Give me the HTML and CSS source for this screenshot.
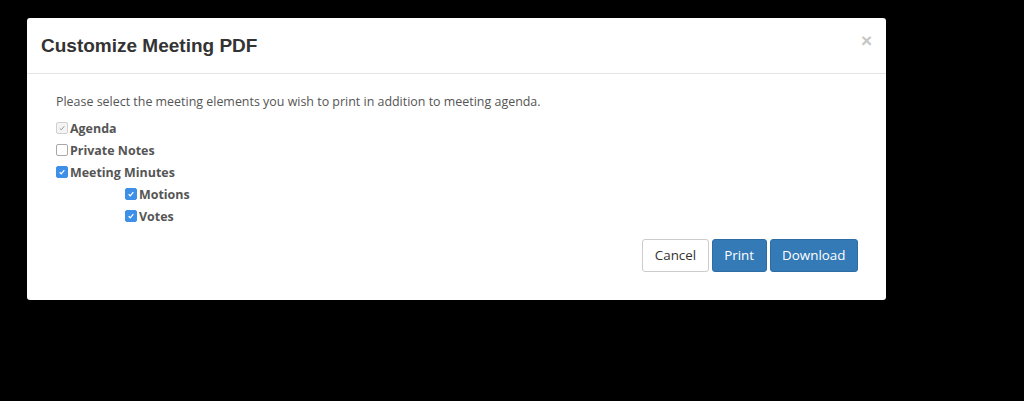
FILE: index.html
```html
<!DOCTYPE html>
<html>
<head>
<meta charset="utf-8">
<link rel="stylesheet" href="styles.css">
</head>
<body>
<div class="modal">
  <div class="modal-header">
    <h4 class="modal-title">Customize Meeting PDF</h4>
    <span class="close">&times;</span>
  </div>
  <div class="modal-body">
    <p class="intro">Please select the meeting elements you wish to print in addition to meeting agenda.</p>
    <label class="opt"><span class="cb disabled"><svg viewBox="0 0 12 12"><path d="M3.2 6.3 L5.1 8.2 L8.8 3.8" fill="none" stroke="#9a9a9a" stroke-width="1.2"/></svg></span>Agenda</label>
    <label class="opt"><span class="cb"></span>Private Notes</label>
    <label class="opt"><span class="cb on"><svg viewBox="0 0 12 12"><path d="M3.2 6.3 L5.1 8.2 L8.8 3.8" fill="none" stroke="#fff" stroke-width="1.5"/></svg></span>Meeting Minutes</label>
    <div class="sub">
      <label class="opt"><span class="cb on"><svg viewBox="0 0 12 12"><path d="M3.2 6.3 L5.1 8.2 L8.8 3.8" fill="none" stroke="#fff" stroke-width="1.5"/></svg></span>Motions</label>
      <label class="opt"><span class="cb on"><svg viewBox="0 0 12 12"><path d="M3.2 6.3 L5.1 8.2 L8.8 3.8" fill="none" stroke="#fff" stroke-width="1.5"/></svg></span>Votes</label>
    </div>
    <div class="actions">
      <button class="btn btn-default">Cancel</button>
      <button class="btn btn-primary">Print</button>
      <button class="btn btn-primary">Download</button>
    </div>
  </div>
</div>
</body>
</html>
```

FILE: styles.css
```css
html, body {
  margin: 0;
  padding: 0;
  background: #000;
  width: 1024px;
  height: 401px;
  overflow: hidden;
}
body {
  padding: 18px 0 0 27px;
  box-sizing: border-box;
}
.modal {
  width: 859px;
  height: 282px;
  background: #fff;
  border-radius: 3px;
  box-sizing: border-box;
}
.modal-header {
  position: relative;
  height: 56px;
  border-bottom: 1px solid #e5e5e5;
  box-sizing: border-box;
  padding: 17px 14px 0 14px;
}
.modal-title {
  margin: 0;
  font-family: "Liberation Sans", Arial, sans-serif;
  font-weight: bold;
  font-size: 19px;
  line-height: 22px;
  color: #333;
}
.close {
  position: absolute;
  right: 14px;
  top: 12px;
  font-family: "Liberation Sans", Arial, sans-serif;
  font-weight: bold;
  font-size: 19px;
  color: #c6c6c6;
}
.modal-body {
  padding: 19px 28px 0 29px;
  font-family: "Open Sans", sans-serif;
  color: #555;
}
.intro {
  margin: 0 0 6px 0;
  font-size: 12.45px;
  line-height: 18px;
}
.opt {
  display: flex;
  align-items: center;
  height: 22px;
  font-size: 12.45px;
  font-weight: bold;
  color: #555;
}
.cb {
  width: 10px;
  height: 10px;
  border: 1px solid #a8a8a8;
  border-radius: 2px;
  margin-right: 2px;
  display: flex;
  box-sizing: content-box;
  background: #fff;
}
.cb svg { width: 10px; height: 10px; }
.cb.disabled { border-color: #d0d0d0; background: #f4f4f4; }
.cb.on { background: #3d8fe8; border-color: #3d8fe8; }
.sub { padding-left: 69px; }
.actions {
  display: flex;
  justify-content: flex-end;
  gap: 3px;
  margin-top: 12px;
}
.btn {
  font-family: "Open Sans", sans-serif;
  font-size: 13.4px;
  height: 33px;
  padding: 0 11.5px 1px;
  border-radius: 3px;
  border: 1px solid transparent;
  cursor: pointer;
}
.btn-default { background: #fff; border-color: #ccc; color: #333; }
.btn-primary { background: #337ab7; border-color: #2e6da4; color: #fff; }
```
